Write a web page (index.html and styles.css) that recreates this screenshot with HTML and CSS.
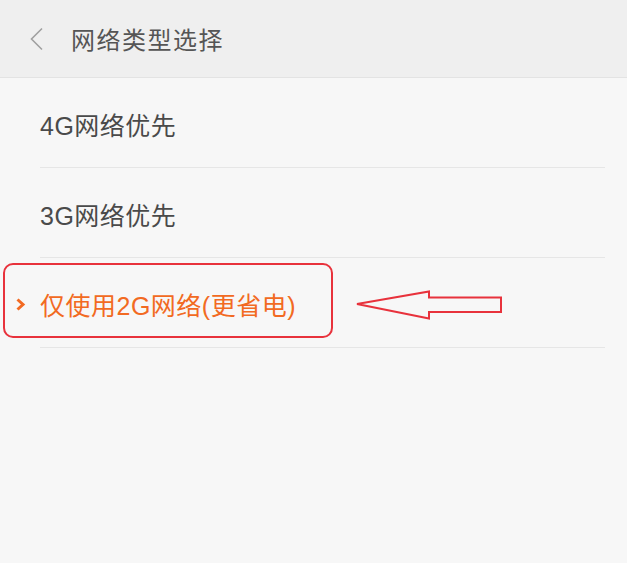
FILE: index.html
```html
<!DOCTYPE html>
<html lang="zh-CN">

<head>
    <meta charset="utf-8">
    <meta name="viewport" content="width=device-width, initial-scale=1.0">
    <title>网络类型选择</title>
    <link rel="stylesheet" href="styles.css">
</head>

<body>
    <header class="topbar">
        <svg class="back" width="16" height="24" viewBox="0 0 16 24">
            <path d="M13 1.5 L2.5 12 L13 22.5" fill="none" stroke="#a0a0a0" stroke-width="1.6" />
        </svg>
        <h1 class="title">网络类型选择</h1>
    </header>

    <main class="list">
        <div class="row">4G网络优先</div>
        <div class="row">3G网络优先</div>
        <div class="row row-selected">
            <svg class="tick" width="11" height="13" viewBox="0 0 11 13">
                <path d="M2.5 1.5 L8 6.5 L2.5 11.5" fill="none" stroke="#f26a22" stroke-width="3" />
            </svg>
            仅使用2G网络(更省电)
        </div>
    </main>

    <!-- markering oven paa skaermbilledet -->
    <div class="mark-box"></div>
    <svg class="mark-arrow" width="150" height="34" viewBox="0 0 150 34">
        <path d="M1 17 L73 4.5 L73 10.5 L145 10.5 L145 25 L73 25 L73 31.5 Z" fill="none" stroke="#e8323c" stroke-width="2" stroke-linejoin="miter" />
    </svg>
</body>

</html>
```

FILE: styles.css
```css
body {
    margin: 0;
    padding: 0;
    background-color: #f7f7f7;
    font-family: "Liberation Sans", "Noto Sans CJK SC", sans-serif;
    height: 563px;
    overflow: hidden;
}

/************ Topbar ************/

.topbar {
    height: 77px;
    background-color: #efefef;
    border-bottom: 1px solid #e3e3e3;
    display: flex;
    align-items: center;
}

.back {
    margin-left: 29px;
    margin-top: 1px;
}

.title {
    margin: 0 0 0 26px;
    font-size: 24px;
    font-weight: 400;
    color: #555555;
    letter-spacing: 1.5px;
}

/************ Liste ************/

.list {
    margin: 0 22px 0 40px;
}

.row {
    position: relative;
    height: 90px;
    box-sizing: border-box;
    border-bottom: 1px solid #e6e6e6;
    display: flex;
    align-items: center;
    font-size: 25px;
    letter-spacing: 0.5px;
    color: #4a4a4a;
    padding-top: 2px;
}

.row-selected {
    color: #f26a22;
}

.tick {
    position: absolute;
    left: -25px;
    top: 40px;
}

/************ Markering ************/

.mark-box {
    position: absolute;
    left: 3px;
    top: 263px;
    width: 326px;
    height: 71px;
    border: 2px solid #e8323c;
    border-radius: 10px;
}

.mark-arrow {
    position: absolute;
    left: 356px;
    top: 287px;
}
```
